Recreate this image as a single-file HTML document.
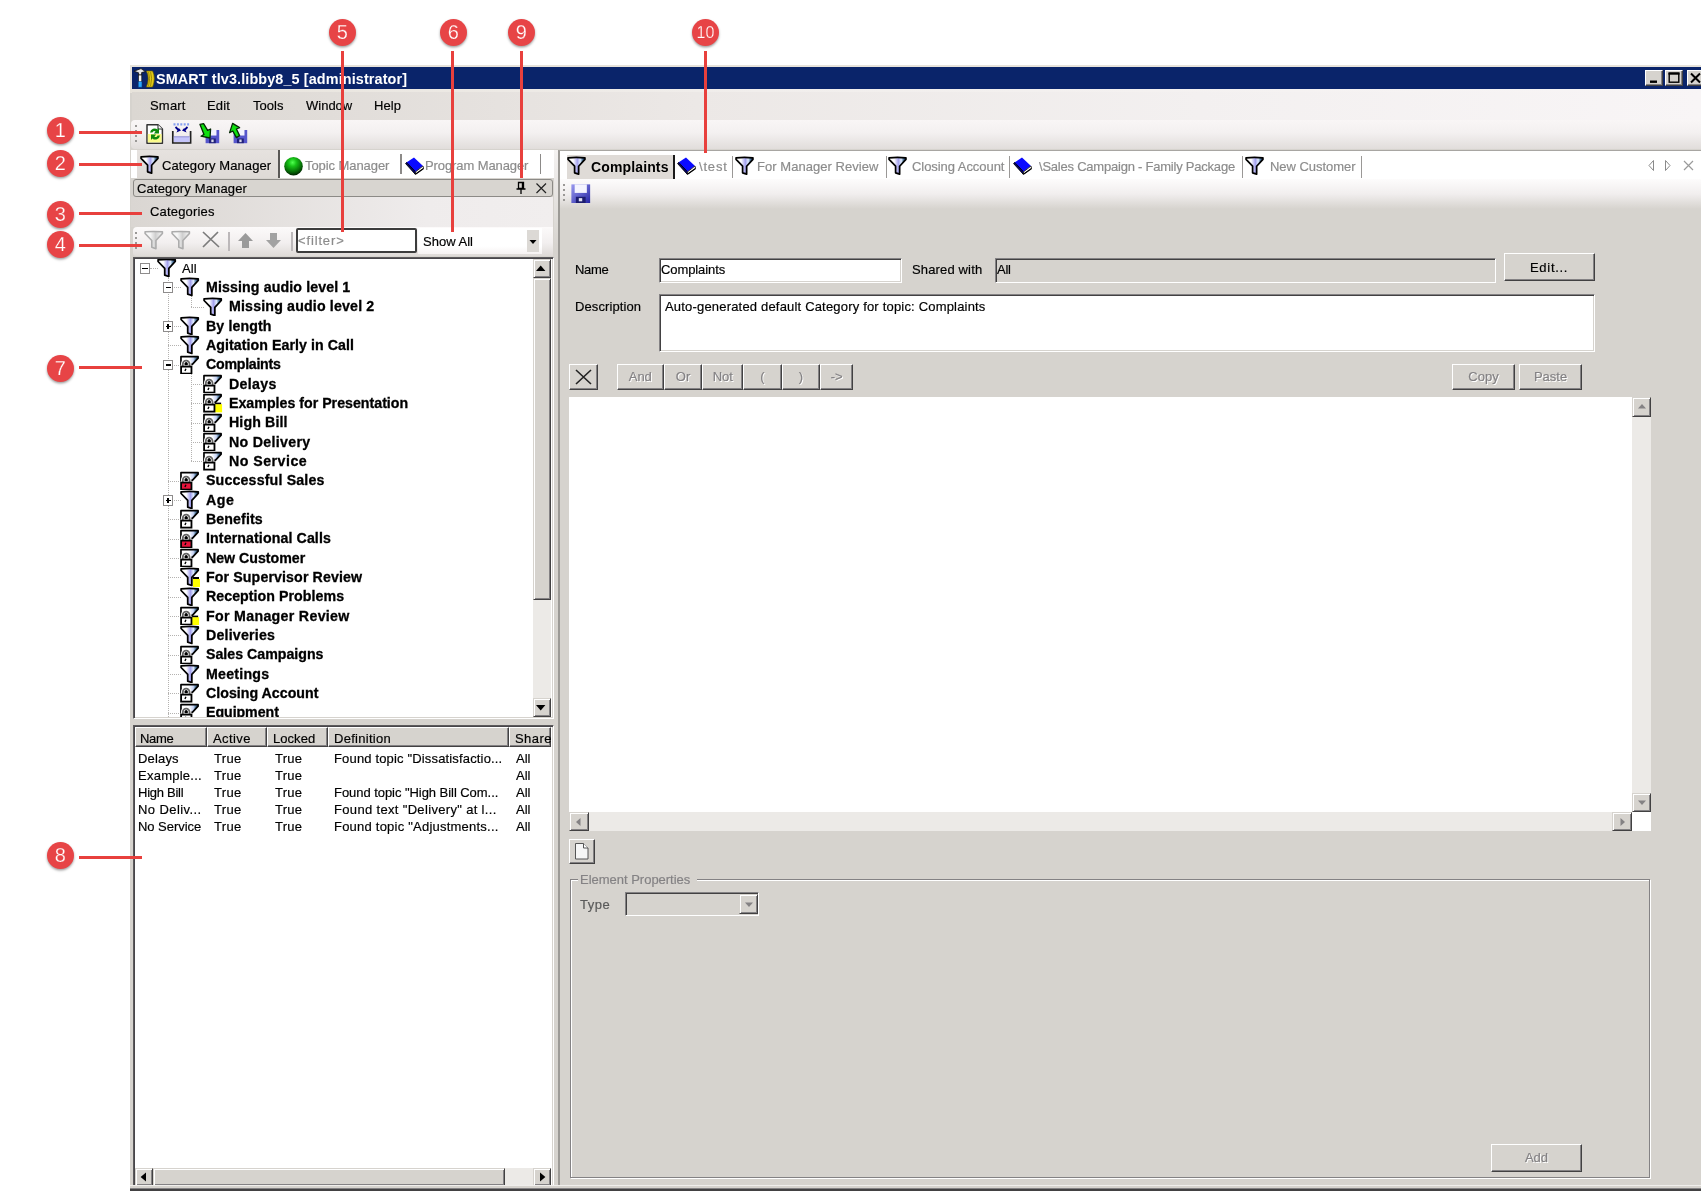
<!DOCTYPE html>
<html><head><meta charset="utf-8"><title>SMART</title>
<style>
html,body{margin:0;padding:0;background:#fff;}
body{width:1701px;height:1192px;position:relative;overflow:hidden;font-family:"Liberation Sans",sans-serif;font-size:13px;color:#000;}
div,svg{position:absolute;box-sizing:border-box;}
.t{white-space:pre;line-height:1;will-change:transform;-webkit-text-stroke:0.18px;}
.tb{white-space:pre;line-height:1;font-weight:bold;will-change:transform;}
.g{color:#8c8c8c;}
.dis{color:#848284;text-shadow:1px 1px 0 #fff;}
.sunk{border:1px solid;border-color:#848284 #fff #fff #848284;box-shadow:inset 1px 1px 0 #424142, inset -1px -1px 0 #d6d3ce;}
.btn{background:#d6d3ce;border:1px solid;border-color:#fff #424142 #424142 #fff;box-shadow:inset -1px -1px 0 #848284;}
.sb{background:#d6d3ce;border:1px solid;border-color:#d6d3ce #424142 #424142 #d6d3ce;box-shadow:inset 1px 1px 0 #fff, inset -1px -1px 0 #848284;}
.co{border-radius:50%;background:#e74446;color:#fff;text-align:center;box-shadow:0 1.5px 2.5px rgba(0,0,0,.38);will-change:transform;-webkit-text-stroke:0.25px #e74446;}
.ln{background:#e8403d;}
.hc{background:#d6d3ce;border:1px solid;border-color:#fff #424142 #424142 #fff;box-shadow:inset -1px -1px 0 #848284;}
</style></head><body>

<div style="left:130px;top:67px;width:1571px;height:1124px;background:#d6d3ce;"></div>
<div style="left:130px;top:65px;width:1571px;height:28px;background:#e7e3db;"></div>
<div style="left:130px;top:89px;width:1571px;height:4px;background:linear-gradient(90deg,#e7e3db,#f1eeec 40%,#f8f5f6);"></div>
<div style="left:132.3px;top:67.1px;width:1569px;height:22.4px;background:#0a246a;"></div>
<div class="tb" style="left:155.51px;top:71.77px;font-size:14.4px;letter-spacing:0.114px;color:#fff;">SMART tlv3.libby8_5 [administrator]</div>
<svg style="left:133px;top:68px" width="24" height="21" viewBox="0 0 24 21"><path d="M1 3.2 L8 0.6 L12.4 3.6 L8.6 4.6 L8.6 7 L5.6 7 L5.6 4.8 Z" fill="#e8e8e8" stroke="#111" stroke-width="0.8"/><rect x="5.4" y="7" width="3.4" height="7.4" fill="#f4f4f4" stroke="#111" stroke-width="0.7"/><rect x="5.2" y="13.6" width="3.8" height="5.6" fill="#28a8ff" stroke="#0a3a7a" stroke-width="0.6"/><path d="M13.4 3 Q17 10 13.4 19 L19.6 19 Q23 10 19.6 3 Z" fill="#e4cc18" stroke="#6a5c00" stroke-width="0.7"/><path d="M15.6 4 Q17.6 10 15.6 18 M17.6 4 Q19.6 10 17.6 18" stroke="#8a7800" stroke-width="0.8" fill="none"/></svg>
<div class="btn" style="left:1645px;top:70px;width:18px;height:16px;"></div>
<div class="btn" style="left:1665px;top:70px;width:18px;height:16px;"></div>
<div class="btn" style="left:1687px;top:70px;width:18px;height:16px;"></div>
<svg style="left:1645px;top:70px" width="56" height="16" viewBox="0 0 56 16"><rect x="5" y="10.5" width="7" height="2.4" fill="#000"/><rect x="24.2" y="3.2" width="9.6" height="9" fill="none" stroke="#000" stroke-width="1.4"/><rect x="23.5" y="2.5" width="11" height="2.2" fill="#000"/><path d="M46 3.5 L55 12.5 M55 3.5 L46 12.5" stroke="#000" stroke-width="2"/></svg>
<div style="left:132.3px;top:92px;width:1569px;height:28px;background:linear-gradient(90deg,#dbd7d2,#ece8e6 36%,#f3f0f0 68%,#f8f5f6);"></div>
<div style="left:131px;top:119.7px;width:1570px;height:29.3px;background:linear-gradient(#f9f6f6,#f3f0f0 45%,#e1dddb);border-radius:4px 0 0 4px;"></div>
<div class="t" style="left:150.19px;top:98.85px;font-size:13px;letter-spacing:0.190px;">Smart</div>
<div class="t" style="left:207.09px;top:98.85px;font-size:13px;letter-spacing:0.175px;">Edit</div>
<div class="t" style="left:252.78px;top:98.85px;font-size:13px;letter-spacing:0.043px;">Tools</div>
<div class="t" style="left:305.89px;top:98.85px;font-size:13px;">Window</div>
<div class="t" style="left:373.79px;top:98.85px;font-size:13px;letter-spacing:0.060px;">Help</div>
<div style="left:135px;top:125px;width:2px;height:2px;background:#9a9896;"></div>
<div style="left:135px;top:130px;width:2px;height:2px;background:#9a9896;"></div>
<div style="left:135px;top:135px;width:2px;height:2px;background:#9a9896;"></div>
<div style="left:135px;top:140px;width:2px;height:2px;background:#9a9896;"></div>
<svg style="left:145px;top:122px" width="20" height="23" viewBox="0 0 20 23"><path d="M2 2.8 H13 L17.4 7 V21.2 H2 Z" fill="#fff" stroke="#333" stroke-width="1.5" stroke-linejoin="round"/><rect x="2.8" y="12" width="13.8" height="8.4" fill="#fbfb8c"/><path d="M13 2.8 V7 H17.4" fill="#fff" stroke="#333" stroke-width="1.1"/><path d="M5 10.4 A4.6 4.6 0 0 1 12.6 7.6 L14 6 V11.4 H8.8 L10.6 9.6 A2.2 2.2 0 0 0 7.4 10.6 Z" fill="#0d8a0d"/><path d="M15 13.6 A4.6 4.6 0 0 1 7.4 16.4 L6 18 V12.6 H11.2 L9.4 14.4 A2.2 2.2 0 0 0 12.6 13.4 Z" fill="#0d8a0d"/></svg>
<svg style="left:171px;top:122px" width="22" height="23" viewBox="0 0 22 23"><path d="M1.8 9 V21 H19.6 V9" fill="none" stroke="#222" stroke-width="1.7"/><rect x="2.8" y="15" width="15.8" height="5" fill="#c4c4fa"/><path d="M2.8 14.8 H18.6" stroke="#8c8cd8" stroke-width="1"/><path d="M2.5 2.4 H19" stroke="#88a0f0" stroke-width="2.4" stroke-dasharray="2 1.4"/><path d="M4.5 5 L7.5 8 M16.5 5 L13.5 8" stroke="#00008a" stroke-width="1.8"/><path d="M5.4 10.6 L10 8.4 L7.8 6 Z M15.6 10.6 L11 8.4 L13.2 6 Z" fill="#00008a"/></svg>
<svg style="left:198px;top:122px" width="24" height="23" viewBox="0 0 24 23"><rect x="7.6" y="8" width="13.6" height="13.2" fill="#5656cc"/><rect x="10.32" y="8" width="8.16" height="5.544" fill="#f2f2ff"/><rect x="11.0" y="16.448" width="6.8" height="4.752" fill="#20207a"/><rect x="13.312" y="17.503999999999998" width="2.3120000000000003" height="2.64" fill="#d8d8e8"/><path d="M2 2.4 L5.6 1.6 L9.6 8.4 L12.6 7 L12 16 L3 14.2 L6 12.4 Z" fill="#10e010" stroke="#062a06" stroke-width="1.3" stroke-linejoin="round"/></svg>
<svg style="left:226px;top:122px" width="24" height="23" viewBox="0 0 24 23"><rect x="7.6" y="8" width="13.6" height="13.2" fill="#5656cc"/><rect x="10.32" y="8" width="8.16" height="5.544" fill="#f2f2ff"/><rect x="11.0" y="16.448" width="6.8" height="4.752" fill="#20207a"/><rect x="13.312" y="17.503999999999998" width="2.3120000000000003" height="2.64" fill="#d8d8e8"/><path d="M6.6 1.4 L13.6 5.6 L10.4 7 L13.6 13.6 L10.4 15.6 L6.8 9 L3.6 10.6 Z" fill="#10e010" stroke="#062a06" stroke-width="1.3" stroke-linejoin="round"/></svg>
<div style="left:131px;top:150px;width:425px;height:28px;background:#fff;"></div>
<div style="left:137px;top:150px;width:141px;height:28px;background:linear-gradient(#e6e2df,#dedad6);"></div>
<div style="left:278px;top:150px;width:2px;height:28px;background:#5a5856;"></div>
<svg style="left:140.00px;top:155.00px" width="19" height="19" viewBox="0 0 16 16"><defs><linearGradient id="g1" x1="0" x2="1" y1="0" y2="0"><stop offset="0.30" stop-color="#fff"/><stop offset="0.55" stop-color="#a4a2ee"/><stop offset="0.72" stop-color="#dfeaff"/><stop offset="0.86" stop-color="#4e7a9c"/><stop offset="0.97" stop-color="#10206a"/></linearGradient></defs><path d="M0.9 1.5 Q8 0.9 15.1 1.5 L15.1 2.9 L9.8 8.6 L9.8 15.3 L6.4 14.2 L6.4 8.6 L0.9 2.9 Z" fill="url(#g1)" stroke="#000" stroke-width="1.45" stroke-linejoin="round"/></svg>
<div class="t" style="left:161.59px;top:159.45px;font-size:13px;letter-spacing:0.097px;">Category Manager</div>
<svg style="left:284px;top:155.5px" width="19" height="20" viewBox="0 0 16 16.8"><defs><radialGradient id="g2" cx="0.45" cy="0.3" r="0.68"><stop offset="0" stop-color="#50ff50"/><stop offset="0.3" stop-color="#18c418"/><stop offset="0.75" stop-color="#066a06"/><stop offset="1" stop-color="#002800"/></radialGradient></defs><circle cx="8" cy="8.6" r="7.8" fill="url(#g2)"/></svg>
<div class="t g" style="left:305.29px;top:159.45px;font-size:13px;letter-spacing:-0.071px;">Topic Manager</div>
<div style="left:400px;top:153.5px;width:1.5px;height:20px;background:#8c8a88;"></div>
<svg style="left:405px;top:157px" width="19" height="18" viewBox="0 0 19 18"><path d="M1.4 5.6 L9 0.4 L18 9 L10.4 15 Z" fill="#0a0aff"/><path d="M0.6 6.6 L1.6 5.4 L10.6 14.8 L10.2 17.2 Z" fill="#00006a" stroke="#000" stroke-width="0.9" stroke-linejoin="round"/><path d="M10.6 14.8 L18 9 L18.6 11.4 L10.4 17.3 Z" fill="#fff" stroke="#222" stroke-width="0.9" stroke-linejoin="round"/><path d="M10.4 17.3 L18.6 11.6" stroke="#000" stroke-width="1.2"/></svg>
<div class="t g" style="left:424.79px;top:159.45px;font-size:13px;letter-spacing:-0.097px;">Program Manager</div>
<div style="left:539.5px;top:153.5px;width:1.5px;height:20px;background:#8c8a88;"></div>
<div style="left:132.5px;top:178.5px;width:420.5px;height:18.5px;background:#d8d5d0;border:1px solid #8c8a86;border-radius:3px;"></div>
<div class="t" style="left:136.88px;top:181.95px;font-size:13px;letter-spacing:0.144px;">Category Manager</div>
<svg style="left:514px;top:180px" width="36" height="16" viewBox="0 0 36 16"><path d="M4.5 2.5 H9.5 V8.5 H4.5 Z M2.5 9 H11.5 M7 9 V14" fill="none" stroke="#000" stroke-width="1.3"/><path d="M8.6 3 V8.5" stroke="#000" stroke-width="1.6"/><path d="M22.5 3.5 L32 13 M32 3.5 L22.5 13" stroke="#222" stroke-width="1.2"/></svg>
<div style="left:131px;top:197px;width:422px;height:30px;background:linear-gradient(90deg,#dad6d2,#efecec 70%,#f1eeee);"></div>
<div class="t" style="left:150.28px;top:205.45px;font-size:13px;letter-spacing:0.173px;">Categories</div>
<div style="left:133px;top:226.5px;width:420px;height:29.5px;background:linear-gradient(#fcfafa,#f2efef 55%,#dedad7);border-radius:4px 0 0 3px;"></div>
<div style="left:135px;top:232px;width:2px;height:2px;background:#9a9896;"></div>
<div style="left:135px;top:237px;width:2px;height:2px;background:#9a9896;"></div>
<div style="left:135px;top:242px;width:2px;height:2px;background:#9a9896;"></div>
<div style="left:135px;top:247px;width:2px;height:2px;background:#9a9896;"></div>
<svg style="left:144.00px;top:230.00px" width="19.5" height="19.5" viewBox="0 0 16 16"><defs><linearGradient id="g3" x1="0" x2="1" y1="0" y2="0"><stop offset="0.3" stop-color="#f6f6f6"/><stop offset="0.6" stop-color="#cfcfcf"/><stop offset="0.85" stop-color="#e8e8e8"/></linearGradient></defs><path d="M0.9 1.5 Q8 0.9 15.1 1.5 L15.1 2.9 L9.8 8.6 L9.8 15.3 L6.4 14.2 L6.4 8.6 L0.9 2.9 Z" fill="url(#g3)" stroke="#acacac" stroke-width="1.3" stroke-linejoin="round"/></svg>
<svg style="left:171.00px;top:230.00px" width="19.5" height="19.5" viewBox="0 0 16 16"><defs><linearGradient id="g4" x1="0" x2="1" y1="0" y2="0"><stop offset="0.3" stop-color="#f6f6f6"/><stop offset="0.6" stop-color="#cfcfcf"/><stop offset="0.85" stop-color="#e8e8e8"/></linearGradient></defs><path d="M0.9 1.5 Q8 0.9 15.1 1.5 L15.1 2.9 L9.8 8.6 L9.8 15.3 L6.4 14.2 L6.4 8.6 L0.9 2.9 Z" fill="url(#g4)" stroke="#acacac" stroke-width="1.3" stroke-linejoin="round"/></svg>
<svg style="left:200px;top:229px" width="22" height="21" viewBox="0 0 22 21"><path d="M3 3 L19 18 M18 3 L3 18" stroke="#7c7c7c" stroke-width="1.7"/></svg>
<div style="left:228px;top:232px;width:1.5px;height:18.5px;background:#bcb8ba;"></div>
<svg style="left:235.5px;top:230.5px" width="48" height="20" viewBox="0 0 48 20"><path d="M9.5 2 L17 10 H13 V17 H6 V10 H2 Z" fill="#9a9a9a"/><path d="M37.5 17 L45 9 H41 V2 H34 V9 H30 Z" fill="#a2a2a2"/></svg>
<div style="left:291px;top:232px;width:1.5px;height:18.5px;background:#bcb8ba;"></div>
<div style="left:295.7px;top:227.6px;width:121.5px;height:25.6px;background:#fff;border:2px solid #3c3c3c;border-radius:2px;"></div>
<div class="t g" style="left:298.29px;top:233.65px;font-size:13px;letter-spacing:0.854px;">&lt;filter&gt;</div>
<div style="left:418px;top:228px;width:124px;height:26px;background:linear-gradient(#fff 70%,#f6f2f2);"></div>
<div class="t" style="left:422.59px;top:235.45px;font-size:13px;letter-spacing:0.008px;">Show All</div>
<div style="left:527.4px;top:230px;width:11.4px;height:21.6px;background:#dcd9d5;"></div>
<svg style="left:527px;top:237.5px" width="12" height="8" viewBox="0 0 12 8"><path d="M2.5 2 H9.5 L6 6 Z" fill="#000"/></svg>
<div style="left:133px;top:256.7px;width:420.5px;height:462px;background:#fff;border:1px solid;border-color:#5c5a5c #fff #fff #5c5a5c;box-shadow:inset 1px 1px 0 #48464a, inset -1px -1px 0 #d6d3ce;"></div>
<div style="left:135px;top:258.7px;width:416.5px;height:458px;overflow:hidden;">
<div style="left:32.7px;top:18.3px;width:0;height:445.6px;border-left:1px dotted #b4b2b0;"></div>
<div style="left:55.8px;top:37.6px;width:0;height:10.3px;border-left:1px dotted #b4b2b0;"></div>
<div style="left:55.8px;top:114.9px;width:0;height:87.6px;border-left:1px dotted #b4b2b0;"></div>
<div style="left:15.0px;top:9.3px;width:8.0px;height:0;border-top:1px dotted #b4b2b0;"></div>
<div style="left:4.7px;top:4.5px;width:10.6px;height:10.6px;border:1.2px solid #8e8c8c;background:#fff;"></div>
<div style="left:7.4px;top:9.1px;width:5.2px;height:1.4px;background:#000;"></div>
<svg style="left:22.30px;top:-0.60px" width="19.33" height="19.33" viewBox="0 0 16 16"><defs><linearGradient id="g5" x1="0" x2="1" y1="0" y2="0"><stop offset="0.30" stop-color="#fff"/><stop offset="0.55" stop-color="#a4a2ee"/><stop offset="0.72" stop-color="#dfeaff"/><stop offset="0.86" stop-color="#4e7a9c"/><stop offset="0.97" stop-color="#10206a"/></linearGradient></defs><path d="M0.9 1.5 Q8 0.9 15.1 1.5 L15.1 2.9 L9.8 8.6 L9.8 15.3 L6.4 14.2 L6.4 8.6 L0.9 2.9 Z" fill="url(#g5)" stroke="#000" stroke-width="1.45" stroke-linejoin="round"/></svg>
<div class="t" style="left:47.28px;top:3.25px;font-size:13px;letter-spacing:0.088px;">All</div>
<div style="left:33.0px;top:28.6px;width:13.0px;height:0;border-top:1px dotted #b4b2b0;"></div>
<div style="left:27.8px;top:23.8px;width:10.6px;height:10.6px;border:1.2px solid #8e8c8c;background:#fff;"></div>
<div style="left:30.5px;top:28.4px;width:5.2px;height:1.4px;background:#000;"></div>
<svg style="left:45.40px;top:18.73px" width="19.33" height="19.33" viewBox="0 0 16 16"><defs><linearGradient id="g6" x1="0" x2="1" y1="0" y2="0"><stop offset="0.30" stop-color="#fff"/><stop offset="0.55" stop-color="#a4a2ee"/><stop offset="0.72" stop-color="#dfeaff"/><stop offset="0.86" stop-color="#4e7a9c"/><stop offset="0.97" stop-color="#10206a"/></linearGradient></defs><path d="M0.9 1.5 Q8 0.9 15.1 1.5 L15.1 2.9 L9.8 8.6 L9.8 15.3 L6.4 14.2 L6.4 8.6 L0.9 2.9 Z" fill="url(#g6)" stroke="#000" stroke-width="1.45" stroke-linejoin="round"/></svg>
<div class="tb" style="left:70.92px;top:21.39px;font-size:14.2px;letter-spacing:0.117px;-webkit-text-stroke:0.3px #000;">Missing audio level 1</div>
<div style="left:56.0px;top:48.0px;width:13.0px;height:0;border-top:1px dotted #b4b2b0;"></div>
<svg style="left:68.40px;top:38.06px" width="19.33" height="19.33" viewBox="0 0 16 16"><defs><linearGradient id="g7" x1="0" x2="1" y1="0" y2="0"><stop offset="0.30" stop-color="#fff"/><stop offset="0.55" stop-color="#a4a2ee"/><stop offset="0.72" stop-color="#dfeaff"/><stop offset="0.86" stop-color="#4e7a9c"/><stop offset="0.97" stop-color="#10206a"/></linearGradient></defs><path d="M0.9 1.5 Q8 0.9 15.1 1.5 L15.1 2.9 L9.8 8.6 L9.8 15.3 L6.4 14.2 L6.4 8.6 L0.9 2.9 Z" fill="url(#g7)" stroke="#000" stroke-width="1.45" stroke-linejoin="round"/></svg>
<div class="tb" style="left:94.02px;top:40.72px;font-size:14.2px;letter-spacing:0.167px;-webkit-text-stroke:0.3px #000;">Missing audio level 2</div>
<div style="left:33.0px;top:67.3px;width:13.0px;height:0;border-top:1px dotted #b4b2b0;"></div>
<div style="left:27.8px;top:62.5px;width:10.6px;height:10.6px;border:1.2px solid #8e8c8c;background:#fff;"></div>
<div style="left:30.5px;top:67.1px;width:5.2px;height:1.4px;background:#000;"></div>
<div style="left:32.4px;top:65.2px;width:1.4px;height:5.2px;background:#000;"></div>
<svg style="left:45.40px;top:57.39px" width="19.33" height="19.33" viewBox="0 0 16 16"><defs><linearGradient id="g8" x1="0" x2="1" y1="0" y2="0"><stop offset="0.30" stop-color="#fff"/><stop offset="0.55" stop-color="#a4a2ee"/><stop offset="0.72" stop-color="#dfeaff"/><stop offset="0.86" stop-color="#4e7a9c"/><stop offset="0.97" stop-color="#10206a"/></linearGradient></defs><path d="M0.9 1.5 Q8 0.9 15.1 1.5 L15.1 2.9 L9.8 8.6 L9.8 15.3 L6.4 14.2 L6.4 8.6 L0.9 2.9 Z" fill="url(#g8)" stroke="#000" stroke-width="1.45" stroke-linejoin="round"/></svg>
<div class="tb" style="left:70.92px;top:60.05px;font-size:14.2px;letter-spacing:0.103px;-webkit-text-stroke:0.3px #000;">By length</div>
<div style="left:33.0px;top:86.6px;width:13.0px;height:0;border-top:1px dotted #b4b2b0;"></div>
<svg style="left:45.40px;top:76.72px" width="19.33" height="19.33" viewBox="0 0 16 16"><defs><linearGradient id="g9" x1="0" x2="1" y1="0" y2="0"><stop offset="0.30" stop-color="#fff"/><stop offset="0.55" stop-color="#a4a2ee"/><stop offset="0.72" stop-color="#dfeaff"/><stop offset="0.86" stop-color="#4e7a9c"/><stop offset="0.97" stop-color="#10206a"/></linearGradient></defs><path d="M0.9 1.5 Q8 0.9 15.1 1.5 L15.1 2.9 L9.8 8.6 L9.8 15.3 L6.4 14.2 L6.4 8.6 L0.9 2.9 Z" fill="url(#g9)" stroke="#000" stroke-width="1.45" stroke-linejoin="round"/></svg>
<div class="tb" style="left:70.92px;top:79.38px;font-size:14.2px;letter-spacing:0.056px;-webkit-text-stroke:0.3px #000;">Agitation Early in Call</div>
<div style="left:33.0px;top:105.9px;width:13.0px;height:0;border-top:1px dotted #b4b2b0;"></div>
<div style="left:27.8px;top:101.1px;width:10.6px;height:10.6px;border:1.2px solid #8e8c8c;background:#fff;"></div>
<div style="left:30.5px;top:105.7px;width:5.2px;height:1.4px;background:#000;"></div>
<svg style="left:45.40px;top:96.05px" width="19.33" height="19.33" viewBox="0 0 16 16"><defs><linearGradient id="g10" x1="0" x2="1" y1="0" y2="0"><stop offset="0.45" stop-color="#fff"/><stop offset="0.72" stop-color="#c8d4f4"/><stop offset="0.86" stop-color="#4e7a9c"/><stop offset="1" stop-color="#10206a"/></linearGradient></defs><path d="M0.8 1.4 H15 L15 2.6 L10.2 7.8 L0.8 7.8 Z" fill="url(#g10)" stroke="#000" stroke-width="1.4" stroke-linejoin="round"/><path d="M2.3 9.6 V7.4 A2.8 2.8 0 0 1 7.9 7.4 V9.6" fill="none" stroke="#fff" stroke-width="3"/><path d="M2.3 9.6 V7.4 A2.8 2.8 0 0 1 7.9 7.4 V9.6" fill="none" stroke="#666" stroke-width="1.5"/><circle cx="5.1" cy="7.1" r="1.25" fill="#000"/><rect x="0.9" y="9.6" width="8.6" height="5.8" fill="#fff" stroke="#000" stroke-width="1.5"/><path d="M4.9 11.3 L4.1 13.3" stroke="#000" stroke-width="1.1"/></svg>
<div class="tb" style="left:70.92px;top:98.71px;font-size:14.2px;letter-spacing:-0.265px;-webkit-text-stroke:0.3px #000;">Complaints</div>
<div style="left:56.0px;top:125.3px;width:13.0px;height:0;border-top:1px dotted #b4b2b0;"></div>
<svg style="left:68.40px;top:115.38px" width="19.33" height="19.33" viewBox="0 0 16 16"><defs><linearGradient id="g11" x1="0" x2="1" y1="0" y2="0"><stop offset="0.45" stop-color="#fff"/><stop offset="0.72" stop-color="#c8d4f4"/><stop offset="0.86" stop-color="#4e7a9c"/><stop offset="1" stop-color="#10206a"/></linearGradient></defs><path d="M0.8 1.4 H15 L15 2.6 L10.2 7.8 L0.8 7.8 Z" fill="url(#g11)" stroke="#000" stroke-width="1.4" stroke-linejoin="round"/><path d="M2.3 9.6 V7.4 A2.8 2.8 0 0 1 7.9 7.4 V9.6" fill="none" stroke="#fff" stroke-width="3"/><path d="M2.3 9.6 V7.4 A2.8 2.8 0 0 1 7.9 7.4 V9.6" fill="none" stroke="#666" stroke-width="1.5"/><circle cx="5.1" cy="7.1" r="1.25" fill="#000"/><rect x="0.9" y="9.6" width="8.6" height="5.8" fill="#fff" stroke="#000" stroke-width="1.5"/><path d="M4.9 11.3 L4.1 13.3" stroke="#000" stroke-width="1.1"/></svg>
<div class="tb" style="left:94.02px;top:118.04px;font-size:14.2px;letter-spacing:0.322px;-webkit-text-stroke:0.3px #000;">Delays</div>
<div style="left:56.0px;top:144.6px;width:13.0px;height:0;border-top:1px dotted #b4b2b0;"></div>
<svg style="left:68.40px;top:134.71px" width="19.33" height="19.33" viewBox="0 0 16 16"><defs><linearGradient id="g12" x1="0" x2="1" y1="0" y2="0"><stop offset="0.45" stop-color="#fff"/><stop offset="0.72" stop-color="#c8d4f4"/><stop offset="0.86" stop-color="#4e7a9c"/><stop offset="1" stop-color="#10206a"/></linearGradient></defs><path d="M0.8 1.4 H15 L15 2.6 L10.2 7.8 L0.8 7.8 Z" fill="url(#g12)" stroke="#000" stroke-width="1.4" stroke-linejoin="round"/><rect x="10" y="9.2" width="5.8" height="6.8" fill="#ffff00"/><path d="M10 8.6 H15" stroke="#000" stroke-width="1.3"/><path d="M2.3 9.6 V7.4 A2.8 2.8 0 0 1 7.9 7.4 V9.6" fill="none" stroke="#fff" stroke-width="3"/><path d="M2.3 9.6 V7.4 A2.8 2.8 0 0 1 7.9 7.4 V9.6" fill="none" stroke="#666" stroke-width="1.5"/><circle cx="5.1" cy="7.1" r="1.25" fill="#000"/><rect x="0.9" y="9.6" width="8.6" height="5.8" fill="#fff" stroke="#000" stroke-width="1.5"/><path d="M4.9 11.3 L4.1 13.3" stroke="#000" stroke-width="1.1"/></svg>
<div class="tb" style="left:94.02px;top:137.37px;font-size:14.2px;letter-spacing:0.007px;-webkit-text-stroke:0.3px #000;">Examples for Presentation</div>
<div style="left:56.0px;top:163.9px;width:13.0px;height:0;border-top:1px dotted #b4b2b0;"></div>
<svg style="left:68.40px;top:154.04px" width="19.33" height="19.33" viewBox="0 0 16 16"><defs><linearGradient id="g13" x1="0" x2="1" y1="0" y2="0"><stop offset="0.45" stop-color="#fff"/><stop offset="0.72" stop-color="#c8d4f4"/><stop offset="0.86" stop-color="#4e7a9c"/><stop offset="1" stop-color="#10206a"/></linearGradient></defs><path d="M0.8 1.4 H15 L15 2.6 L10.2 7.8 L0.8 7.8 Z" fill="url(#g13)" stroke="#000" stroke-width="1.4" stroke-linejoin="round"/><path d="M2.3 9.6 V7.4 A2.8 2.8 0 0 1 7.9 7.4 V9.6" fill="none" stroke="#fff" stroke-width="3"/><path d="M2.3 9.6 V7.4 A2.8 2.8 0 0 1 7.9 7.4 V9.6" fill="none" stroke="#666" stroke-width="1.5"/><circle cx="5.1" cy="7.1" r="1.25" fill="#000"/><rect x="0.9" y="9.6" width="8.6" height="5.8" fill="#fff" stroke="#000" stroke-width="1.5"/><path d="M4.9 11.3 L4.1 13.3" stroke="#000" stroke-width="1.1"/></svg>
<div class="tb" style="left:94.02px;top:156.70px;font-size:14.2px;letter-spacing:0.127px;-webkit-text-stroke:0.3px #000;">High Bill</div>
<div style="left:56.0px;top:183.3px;width:13.0px;height:0;border-top:1px dotted #b4b2b0;"></div>
<svg style="left:68.40px;top:173.37px" width="19.33" height="19.33" viewBox="0 0 16 16"><defs><linearGradient id="g14" x1="0" x2="1" y1="0" y2="0"><stop offset="0.45" stop-color="#fff"/><stop offset="0.72" stop-color="#c8d4f4"/><stop offset="0.86" stop-color="#4e7a9c"/><stop offset="1" stop-color="#10206a"/></linearGradient></defs><path d="M0.8 1.4 H15 L15 2.6 L10.2 7.8 L0.8 7.8 Z" fill="url(#g14)" stroke="#000" stroke-width="1.4" stroke-linejoin="round"/><path d="M2.3 9.6 V7.4 A2.8 2.8 0 0 1 7.9 7.4 V9.6" fill="none" stroke="#fff" stroke-width="3"/><path d="M2.3 9.6 V7.4 A2.8 2.8 0 0 1 7.9 7.4 V9.6" fill="none" stroke="#666" stroke-width="1.5"/><circle cx="5.1" cy="7.1" r="1.25" fill="#000"/><rect x="0.9" y="9.6" width="8.6" height="5.8" fill="#fff" stroke="#000" stroke-width="1.5"/><path d="M4.9 11.3 L4.1 13.3" stroke="#000" stroke-width="1.1"/></svg>
<div class="tb" style="left:94.02px;top:176.03px;font-size:14.2px;letter-spacing:0.308px;-webkit-text-stroke:0.3px #000;">No Delivery</div>
<div style="left:56.0px;top:202.6px;width:13.0px;height:0;border-top:1px dotted #b4b2b0;"></div>
<svg style="left:68.40px;top:192.70px" width="19.33" height="19.33" viewBox="0 0 16 16"><defs><linearGradient id="g15" x1="0" x2="1" y1="0" y2="0"><stop offset="0.45" stop-color="#fff"/><stop offset="0.72" stop-color="#c8d4f4"/><stop offset="0.86" stop-color="#4e7a9c"/><stop offset="1" stop-color="#10206a"/></linearGradient></defs><path d="M0.8 1.4 H15 L15 2.6 L10.2 7.8 L0.8 7.8 Z" fill="url(#g15)" stroke="#000" stroke-width="1.4" stroke-linejoin="round"/><path d="M2.3 9.6 V7.4 A2.8 2.8 0 0 1 7.9 7.4 V9.6" fill="none" stroke="#fff" stroke-width="3"/><path d="M2.3 9.6 V7.4 A2.8 2.8 0 0 1 7.9 7.4 V9.6" fill="none" stroke="#666" stroke-width="1.5"/><circle cx="5.1" cy="7.1" r="1.25" fill="#000"/><rect x="0.9" y="9.6" width="8.6" height="5.8" fill="#fff" stroke="#000" stroke-width="1.5"/><path d="M4.9 11.3 L4.1 13.3" stroke="#000" stroke-width="1.1"/></svg>
<div class="tb" style="left:94.02px;top:195.36px;font-size:14.2px;letter-spacing:0.480px;-webkit-text-stroke:0.3px #000;">No Service</div>
<div style="left:33.0px;top:221.9px;width:13.0px;height:0;border-top:1px dotted #b4b2b0;"></div>
<svg style="left:45.40px;top:212.03px" width="19.33" height="19.33" viewBox="0 0 16 16"><defs><linearGradient id="g16" x1="0" x2="1" y1="0" y2="0"><stop offset="0.45" stop-color="#fff"/><stop offset="0.72" stop-color="#c8d4f4"/><stop offset="0.86" stop-color="#4e7a9c"/><stop offset="1" stop-color="#10206a"/></linearGradient></defs><path d="M0.8 1.4 H15 L15 2.6 L10.2 7.8 L0.8 7.8 Z" fill="url(#g16)" stroke="#000" stroke-width="1.4" stroke-linejoin="round"/><path d="M2.3 9.6 V7.4 A2.8 2.8 0 0 1 7.9 7.4 V9.6" fill="none" stroke="#fff" stroke-width="3"/><path d="M2.3 9.6 V7.4 A2.8 2.8 0 0 1 7.9 7.4 V9.6" fill="none" stroke="#666" stroke-width="1.5"/><circle cx="5.1" cy="7.1" r="1.25" fill="#000"/><rect x="0.9" y="9.6" width="8.6" height="5.8" fill="#e8143c" stroke="#000" stroke-width="1.5"/><path d="M4.9 11.3 L4.1 13.3" stroke="#000" stroke-width="1.1"/></svg>
<div class="tb" style="left:70.92px;top:214.69px;font-size:14.2px;letter-spacing:0.162px;-webkit-text-stroke:0.3px #000;">Successful Sales</div>
<div style="left:33.0px;top:241.3px;width:13.0px;height:0;border-top:1px dotted #b4b2b0;"></div>
<div style="left:27.8px;top:236.5px;width:10.6px;height:10.6px;border:1.2px solid #8e8c8c;background:#fff;"></div>
<div style="left:30.5px;top:241.1px;width:5.2px;height:1.4px;background:#000;"></div>
<div style="left:32.4px;top:239.2px;width:1.4px;height:5.2px;background:#000;"></div>
<svg style="left:45.40px;top:231.36px" width="19.33" height="19.33" viewBox="0 0 16 16"><defs><linearGradient id="g17" x1="0" x2="1" y1="0" y2="0"><stop offset="0.30" stop-color="#fff"/><stop offset="0.55" stop-color="#a4a2ee"/><stop offset="0.72" stop-color="#dfeaff"/><stop offset="0.86" stop-color="#4e7a9c"/><stop offset="0.97" stop-color="#10206a"/></linearGradient></defs><path d="M0.9 1.5 Q8 0.9 15.1 1.5 L15.1 2.9 L9.8 8.6 L9.8 15.3 L6.4 14.2 L6.4 8.6 L0.9 2.9 Z" fill="url(#g17)" stroke="#000" stroke-width="1.45" stroke-linejoin="round"/></svg>
<div class="tb" style="left:70.92px;top:234.02px;font-size:14.2px;letter-spacing:0.525px;-webkit-text-stroke:0.3px #000;">Age</div>
<div style="left:33.0px;top:260.6px;width:13.0px;height:0;border-top:1px dotted #b4b2b0;"></div>
<svg style="left:45.40px;top:250.69px" width="19.33" height="19.33" viewBox="0 0 16 16"><defs><linearGradient id="g18" x1="0" x2="1" y1="0" y2="0"><stop offset="0.45" stop-color="#fff"/><stop offset="0.72" stop-color="#c8d4f4"/><stop offset="0.86" stop-color="#4e7a9c"/><stop offset="1" stop-color="#10206a"/></linearGradient></defs><path d="M0.8 1.4 H15 L15 2.6 L10.2 7.8 L0.8 7.8 Z" fill="url(#g18)" stroke="#000" stroke-width="1.4" stroke-linejoin="round"/><path d="M2.3 9.6 V7.4 A2.8 2.8 0 0 1 7.9 7.4 V9.6" fill="none" stroke="#fff" stroke-width="3"/><path d="M2.3 9.6 V7.4 A2.8 2.8 0 0 1 7.9 7.4 V9.6" fill="none" stroke="#666" stroke-width="1.5"/><circle cx="5.1" cy="7.1" r="1.25" fill="#000"/><rect x="0.9" y="9.6" width="8.6" height="5.8" fill="#fff" stroke="#000" stroke-width="1.5"/><path d="M4.9 11.3 L4.1 13.3" stroke="#000" stroke-width="1.1"/></svg>
<div class="tb" style="left:70.92px;top:253.35px;font-size:14.2px;letter-spacing:0.097px;-webkit-text-stroke:0.3px #000;">Benefits</div>
<div style="left:33.0px;top:279.9px;width:13.0px;height:0;border-top:1px dotted #b4b2b0;"></div>
<svg style="left:45.40px;top:270.02px" width="19.33" height="19.33" viewBox="0 0 16 16"><defs><linearGradient id="g19" x1="0" x2="1" y1="0" y2="0"><stop offset="0.45" stop-color="#fff"/><stop offset="0.72" stop-color="#c8d4f4"/><stop offset="0.86" stop-color="#4e7a9c"/><stop offset="1" stop-color="#10206a"/></linearGradient></defs><path d="M0.8 1.4 H15 L15 2.6 L10.2 7.8 L0.8 7.8 Z" fill="url(#g19)" stroke="#000" stroke-width="1.4" stroke-linejoin="round"/><path d="M2.3 9.6 V7.4 A2.8 2.8 0 0 1 7.9 7.4 V9.6" fill="none" stroke="#fff" stroke-width="3"/><path d="M2.3 9.6 V7.4 A2.8 2.8 0 0 1 7.9 7.4 V9.6" fill="none" stroke="#666" stroke-width="1.5"/><circle cx="5.1" cy="7.1" r="1.25" fill="#000"/><rect x="0.9" y="9.6" width="8.6" height="5.8" fill="#e8143c" stroke="#000" stroke-width="1.5"/><path d="M4.9 11.3 L4.1 13.3" stroke="#000" stroke-width="1.1"/></svg>
<div class="tb" style="left:70.92px;top:272.68px;font-size:14.2px;letter-spacing:0.104px;-webkit-text-stroke:0.3px #000;">International Calls</div>
<div style="left:33.0px;top:299.3px;width:13.0px;height:0;border-top:1px dotted #b4b2b0;"></div>
<svg style="left:45.40px;top:289.35px" width="19.33" height="19.33" viewBox="0 0 16 16"><defs><linearGradient id="g20" x1="0" x2="1" y1="0" y2="0"><stop offset="0.45" stop-color="#fff"/><stop offset="0.72" stop-color="#c8d4f4"/><stop offset="0.86" stop-color="#4e7a9c"/><stop offset="1" stop-color="#10206a"/></linearGradient></defs><path d="M0.8 1.4 H15 L15 2.6 L10.2 7.8 L0.8 7.8 Z" fill="url(#g20)" stroke="#000" stroke-width="1.4" stroke-linejoin="round"/><path d="M2.3 9.6 V7.4 A2.8 2.8 0 0 1 7.9 7.4 V9.6" fill="none" stroke="#fff" stroke-width="3"/><path d="M2.3 9.6 V7.4 A2.8 2.8 0 0 1 7.9 7.4 V9.6" fill="none" stroke="#666" stroke-width="1.5"/><circle cx="5.1" cy="7.1" r="1.25" fill="#000"/><rect x="0.9" y="9.6" width="8.6" height="5.8" fill="#fff" stroke="#000" stroke-width="1.5"/><path d="M4.9 11.3 L4.1 13.3" stroke="#000" stroke-width="1.1"/></svg>
<div class="tb" style="left:70.92px;top:292.01px;font-size:14.2px;letter-spacing:-0.007px;-webkit-text-stroke:0.3px #000;">New Customer</div>
<div style="left:33.0px;top:318.6px;width:13.0px;height:0;border-top:1px dotted #b4b2b0;"></div>
<svg style="left:45.40px;top:308.68px" width="19.33" height="19.33" viewBox="0 0 16 16"><defs><linearGradient id="g21" x1="0" x2="1" y1="0" y2="0"><stop offset="0.30" stop-color="#fff"/><stop offset="0.55" stop-color="#a4a2ee"/><stop offset="0.72" stop-color="#dfeaff"/><stop offset="0.86" stop-color="#4e7a9c"/><stop offset="0.97" stop-color="#10206a"/></linearGradient></defs><path d="M0.9 1.5 Q8 0.9 15.1 1.5 L15.1 2.9 L9.8 8.6 L9.8 15.3 L6.4 14.2 L6.4 8.6 L0.9 2.9 Z" fill="url(#g21)" stroke="#000" stroke-width="1.45" stroke-linejoin="round"/></svg>
<div style="left:57.8px;top:319.9px;width:7px;height:8.2px;background:#ffff00;"></div>
<div style="left:57.8px;top:318.5px;width:6px;height:1.6px;background:#000;"></div>
<div class="tb" style="left:70.92px;top:311.34px;font-size:14.2px;letter-spacing:0.116px;-webkit-text-stroke:0.3px #000;">For Supervisor Review</div>
<div style="left:33.0px;top:337.9px;width:13.0px;height:0;border-top:1px dotted #b4b2b0;"></div>
<svg style="left:45.40px;top:328.01px" width="19.33" height="19.33" viewBox="0 0 16 16"><defs><linearGradient id="g22" x1="0" x2="1" y1="0" y2="0"><stop offset="0.30" stop-color="#fff"/><stop offset="0.55" stop-color="#a4a2ee"/><stop offset="0.72" stop-color="#dfeaff"/><stop offset="0.86" stop-color="#4e7a9c"/><stop offset="0.97" stop-color="#10206a"/></linearGradient></defs><path d="M0.9 1.5 Q8 0.9 15.1 1.5 L15.1 2.9 L9.8 8.6 L9.8 15.3 L6.4 14.2 L6.4 8.6 L0.9 2.9 Z" fill="url(#g22)" stroke="#000" stroke-width="1.45" stroke-linejoin="round"/></svg>
<div class="tb" style="left:70.92px;top:330.67px;font-size:14.2px;letter-spacing:0.051px;-webkit-text-stroke:0.3px #000;">Reception Problems</div>
<div style="left:33.0px;top:357.2px;width:13.0px;height:0;border-top:1px dotted #b4b2b0;"></div>
<svg style="left:45.40px;top:347.34px" width="19.33" height="19.33" viewBox="0 0 16 16"><defs><linearGradient id="g23" x1="0" x2="1" y1="0" y2="0"><stop offset="0.45" stop-color="#fff"/><stop offset="0.72" stop-color="#c8d4f4"/><stop offset="0.86" stop-color="#4e7a9c"/><stop offset="1" stop-color="#10206a"/></linearGradient></defs><path d="M0.8 1.4 H15 L15 2.6 L10.2 7.8 L0.8 7.8 Z" fill="url(#g23)" stroke="#000" stroke-width="1.4" stroke-linejoin="round"/><rect x="10" y="9.2" width="5.8" height="6.8" fill="#ffff00"/><path d="M10 8.6 H15" stroke="#000" stroke-width="1.3"/><path d="M2.3 9.6 V7.4 A2.8 2.8 0 0 1 7.9 7.4 V9.6" fill="none" stroke="#fff" stroke-width="3"/><path d="M2.3 9.6 V7.4 A2.8 2.8 0 0 1 7.9 7.4 V9.6" fill="none" stroke="#666" stroke-width="1.5"/><circle cx="5.1" cy="7.1" r="1.25" fill="#000"/><rect x="0.9" y="9.6" width="8.6" height="5.8" fill="#fff" stroke="#000" stroke-width="1.5"/><path d="M4.9 11.3 L4.1 13.3" stroke="#000" stroke-width="1.1"/></svg>
<div class="tb" style="left:70.92px;top:350.00px;font-size:14.2px;letter-spacing:0.316px;-webkit-text-stroke:0.3px #000;">For Manager Review</div>
<div style="left:33.0px;top:376.6px;width:13.0px;height:0;border-top:1px dotted #b4b2b0;"></div>
<svg style="left:45.40px;top:366.67px" width="19.33" height="19.33" viewBox="0 0 16 16"><defs><linearGradient id="g24" x1="0" x2="1" y1="0" y2="0"><stop offset="0.30" stop-color="#fff"/><stop offset="0.55" stop-color="#a4a2ee"/><stop offset="0.72" stop-color="#dfeaff"/><stop offset="0.86" stop-color="#4e7a9c"/><stop offset="0.97" stop-color="#10206a"/></linearGradient></defs><path d="M0.9 1.5 Q8 0.9 15.1 1.5 L15.1 2.9 L9.8 8.6 L9.8 15.3 L6.4 14.2 L6.4 8.6 L0.9 2.9 Z" fill="url(#g24)" stroke="#000" stroke-width="1.45" stroke-linejoin="round"/></svg>
<div class="tb" style="left:70.92px;top:369.33px;font-size:14.2px;letter-spacing:0.202px;-webkit-text-stroke:0.3px #000;">Deliveries</div>
<div style="left:33.0px;top:395.9px;width:13.0px;height:0;border-top:1px dotted #b4b2b0;"></div>
<svg style="left:45.40px;top:386.00px" width="19.33" height="19.33" viewBox="0 0 16 16"><defs><linearGradient id="g25" x1="0" x2="1" y1="0" y2="0"><stop offset="0.45" stop-color="#fff"/><stop offset="0.72" stop-color="#c8d4f4"/><stop offset="0.86" stop-color="#4e7a9c"/><stop offset="1" stop-color="#10206a"/></linearGradient></defs><path d="M0.8 1.4 H15 L15 2.6 L10.2 7.8 L0.8 7.8 Z" fill="url(#g25)" stroke="#000" stroke-width="1.4" stroke-linejoin="round"/><path d="M2.3 9.6 V7.4 A2.8 2.8 0 0 1 7.9 7.4 V9.6" fill="none" stroke="#fff" stroke-width="3"/><path d="M2.3 9.6 V7.4 A2.8 2.8 0 0 1 7.9 7.4 V9.6" fill="none" stroke="#666" stroke-width="1.5"/><circle cx="5.1" cy="7.1" r="1.25" fill="#000"/><rect x="0.9" y="9.6" width="8.6" height="5.8" fill="#fff" stroke="#000" stroke-width="1.5"/><path d="M4.9 11.3 L4.1 13.3" stroke="#000" stroke-width="1.1"/></svg>
<div class="tb" style="left:70.92px;top:388.66px;font-size:14.2px;-webkit-text-stroke:0.3px #000;">Sales Campaigns</div>
<div style="left:33.0px;top:415.2px;width:13.0px;height:0;border-top:1px dotted #b4b2b0;"></div>
<svg style="left:45.40px;top:405.33px" width="19.33" height="19.33" viewBox="0 0 16 16"><defs><linearGradient id="g26" x1="0" x2="1" y1="0" y2="0"><stop offset="0.30" stop-color="#fff"/><stop offset="0.55" stop-color="#a4a2ee"/><stop offset="0.72" stop-color="#dfeaff"/><stop offset="0.86" stop-color="#4e7a9c"/><stop offset="0.97" stop-color="#10206a"/></linearGradient></defs><path d="M0.9 1.5 Q8 0.9 15.1 1.5 L15.1 2.9 L9.8 8.6 L9.8 15.3 L6.4 14.2 L6.4 8.6 L0.9 2.9 Z" fill="url(#g26)" stroke="#000" stroke-width="1.45" stroke-linejoin="round"/></svg>
<div class="tb" style="left:70.92px;top:407.99px;font-size:14.2px;letter-spacing:0.223px;-webkit-text-stroke:0.3px #000;">Meetings</div>
<div style="left:33.0px;top:434.6px;width:13.0px;height:0;border-top:1px dotted #b4b2b0;"></div>
<svg style="left:45.40px;top:424.66px" width="19.33" height="19.33" viewBox="0 0 16 16"><defs><linearGradient id="g27" x1="0" x2="1" y1="0" y2="0"><stop offset="0.45" stop-color="#fff"/><stop offset="0.72" stop-color="#c8d4f4"/><stop offset="0.86" stop-color="#4e7a9c"/><stop offset="1" stop-color="#10206a"/></linearGradient></defs><path d="M0.8 1.4 H15 L15 2.6 L10.2 7.8 L0.8 7.8 Z" fill="url(#g27)" stroke="#000" stroke-width="1.4" stroke-linejoin="round"/><path d="M2.3 9.6 V7.4 A2.8 2.8 0 0 1 7.9 7.4 V9.6" fill="none" stroke="#fff" stroke-width="3"/><path d="M2.3 9.6 V7.4 A2.8 2.8 0 0 1 7.9 7.4 V9.6" fill="none" stroke="#666" stroke-width="1.5"/><circle cx="5.1" cy="7.1" r="1.25" fill="#000"/><rect x="0.9" y="9.6" width="8.6" height="5.8" fill="#fff" stroke="#000" stroke-width="1.5"/><path d="M4.9 11.3 L4.1 13.3" stroke="#000" stroke-width="1.1"/></svg>
<div class="tb" style="left:70.92px;top:427.32px;font-size:14.2px;letter-spacing:0.020px;-webkit-text-stroke:0.3px #000;">Closing Account</div>
<div style="left:33.0px;top:453.9px;width:13.0px;height:0;border-top:1px dotted #b4b2b0;"></div>
<svg style="left:45.40px;top:443.99px" width="19.33" height="19.33" viewBox="0 0 16 16"><defs><linearGradient id="g28" x1="0" x2="1" y1="0" y2="0"><stop offset="0.45" stop-color="#fff"/><stop offset="0.72" stop-color="#c8d4f4"/><stop offset="0.86" stop-color="#4e7a9c"/><stop offset="1" stop-color="#10206a"/></linearGradient></defs><path d="M0.8 1.4 H15 L15 2.6 L10.2 7.8 L0.8 7.8 Z" fill="url(#g28)" stroke="#000" stroke-width="1.4" stroke-linejoin="round"/><path d="M2.3 9.6 V7.4 A2.8 2.8 0 0 1 7.9 7.4 V9.6" fill="none" stroke="#fff" stroke-width="3"/><path d="M2.3 9.6 V7.4 A2.8 2.8 0 0 1 7.9 7.4 V9.6" fill="none" stroke="#666" stroke-width="1.5"/><circle cx="5.1" cy="7.1" r="1.25" fill="#000"/><rect x="0.9" y="9.6" width="8.6" height="5.8" fill="#fff" stroke="#000" stroke-width="1.5"/><path d="M4.9 11.3 L4.1 13.3" stroke="#000" stroke-width="1.1"/></svg>
<div class="tb" style="left:70.92px;top:446.65px;font-size:14.2px;letter-spacing:-0.056px;-webkit-text-stroke:0.3px #000;">Equipment</div>
</div>
<div style="left:532.5px;top:258.7px;width:18.5px;height:458px;background:#eceae7;"></div>
<div class="sb" style="left:532.5px;top:258.7px;width:18.5px;height:19.3px;"></div>
<div class="sb" style="left:532.5px;top:278px;width:18.5px;height:321.5px;"></div>
<div class="sb" style="left:532.5px;top:697.7px;width:18.5px;height:19.3px;"></div>
<svg style="left:536.2px;top:264.7px" width="10" height="7" viewBox="0 0 10 7"><path d="M4.7 0.6 L9.4 6 H0 Z" fill="#000"/></svg>
<svg style="left:536.2px;top:704px" width="10" height="7" viewBox="0 0 10 7"><path d="M4.7 6.4 L9.4 1 H0 Z" fill="#000"/></svg>
<div style="left:133px;top:725px;width:420.5px;height:463.5px;background:#fff;border:1px solid;border-color:#5c5a5c #fff #fff #5c5a5c;box-shadow:inset 1px 1px 0 #48464a, inset -1px -1px 0 #d6d3ce;"></div>
<div class="hc" style="left:135px;top:727.3px;width:71.5px;height:19.6px;"></div>
<div class="t" style="left:140.48px;top:731.95px;font-size:13px;letter-spacing:-0.319px;">Name</div>
<div class="hc" style="left:206.5px;top:727.3px;width:60.80000000000001px;height:19.6px;"></div>
<div class="t" style="left:213.28px;top:731.95px;font-size:13px;letter-spacing:0.405px;">Active</div>
<div class="hc" style="left:267.3px;top:727.3px;width:60.69999999999999px;height:19.6px;"></div>
<div class="t" style="left:273.29px;top:731.95px;font-size:13px;letter-spacing:0.042px;">Locked</div>
<div class="hc" style="left:328px;top:727.3px;width:181.3px;height:19.6px;"></div>
<div class="t" style="left:333.69px;top:731.95px;font-size:13px;letter-spacing:0.281px;">Definition</div>
<div class="hc" style="left:509.3px;top:727.3px;width:41.69999999999999px;height:19.6px;"></div>
<div class="t" style="left:515.28px;top:731.95px;font-size:13px;letter-spacing:0.432px;">Share</div>
<div class="t" style="left:138.09px;top:752.15px;font-size:13px;letter-spacing:0.176px;">Delays</div>
<div class="t" style="left:213.98px;top:752.15px;font-size:13px;letter-spacing:0.360px;">True</div>
<div class="t" style="left:274.89px;top:752.15px;font-size:13px;letter-spacing:0.260px;">True</div>
<div class="t" style="left:333.99px;top:752.15px;font-size:13px;letter-spacing:0.160px;">Found topic "Dissatisfactio...</div>
<div class="t" style="left:516.28px;top:752.15px;font-size:13px;letter-spacing:-0.012px;">All</div>
<div class="t" style="left:138.09px;top:769.15px;font-size:13px;letter-spacing:0.245px;">Example...</div>
<div class="t" style="left:213.98px;top:769.15px;font-size:13px;letter-spacing:0.360px;">True</div>
<div class="t" style="left:274.89px;top:769.15px;font-size:13px;letter-spacing:0.260px;">True</div>
<div class="t" style="left:516.28px;top:769.15px;font-size:13px;letter-spacing:-0.012px;">All</div>
<div class="t" style="left:138.09px;top:786.15px;font-size:13px;letter-spacing:-0.257px;">High Bill</div>
<div class="t" style="left:213.98px;top:786.15px;font-size:13px;letter-spacing:0.360px;">True</div>
<div class="t" style="left:274.89px;top:786.15px;font-size:13px;letter-spacing:0.260px;">True</div>
<div class="t" style="left:333.99px;top:786.15px;font-size:13px;letter-spacing:-0.051px;">Found topic "High Bill Com...</div>
<div class="t" style="left:516.28px;top:786.15px;font-size:13px;letter-spacing:-0.012px;">All</div>
<div class="t" style="left:138.09px;top:803.15px;font-size:13px;letter-spacing:0.423px;">No Deliv...</div>
<div class="t" style="left:213.98px;top:803.15px;font-size:13px;letter-spacing:0.360px;">True</div>
<div class="t" style="left:274.89px;top:803.15px;font-size:13px;letter-spacing:0.260px;">True</div>
<div class="t" style="left:333.99px;top:803.15px;font-size:13px;letter-spacing:0.333px;">Found text "Delivery" at l...</div>
<div class="t" style="left:516.28px;top:803.15px;font-size:13px;letter-spacing:-0.012px;">All</div>
<div class="t" style="left:138.09px;top:820.15px;font-size:13px;letter-spacing:-0.039px;">No Service</div>
<div class="t" style="left:213.98px;top:820.15px;font-size:13px;letter-spacing:0.360px;">True</div>
<div class="t" style="left:274.89px;top:820.15px;font-size:13px;letter-spacing:0.260px;">True</div>
<div class="t" style="left:333.99px;top:820.15px;font-size:13px;letter-spacing:0.223px;">Found topic "Adjustments...</div>
<div class="t" style="left:516.28px;top:820.15px;font-size:13px;letter-spacing:-0.012px;">All</div>
<div style="left:135px;top:1168.3px;width:416px;height:17.7px;background:#eceae7;"></div>
<div class="sb" style="left:135px;top:1168.3px;width:18px;height:17.7px;"></div>
<div class="sb" style="left:153px;top:1168.3px;width:352px;height:17.7px;"></div>
<div class="sb" style="left:533px;top:1168.3px;width:18px;height:17.7px;"></div>
<svg style="left:140px;top:1172px" width="7" height="10" viewBox="0 0 7 10"><path d="M0.6 5 L6 0.4 V9.6 Z" fill="#000"/></svg>
<svg style="left:539px;top:1172px" width="7" height="10" viewBox="0 0 7 10"><path d="M6.4 5 L1 0.4 V9.6 Z" fill="#000"/></svg>
<div style="left:553.5px;top:150px;width:4.5px;height:1036px;background:linear-gradient(#f4f2f1,#d6d3ce 100px);"></div>
<div style="left:558px;top:150px;width:1143px;height:1036px;background:#d6d3ce;border-left:2px solid #9c9a96;border-top:1px solid #a8a6a2;"></div>
<div style="left:560px;top:151px;width:1141px;height:28px;background:#fff;"></div>
<div style="left:567px;top:155px;width:106px;height:24px;background:#dfdbd7;"></div>
<div style="left:673px;top:155px;width:1.8px;height:24px;background:#1a1a1a;"></div>
<svg style="left:567.00px;top:155.80px" width="19" height="19" viewBox="0 0 16 16"><defs><linearGradient id="g29" x1="0" x2="1" y1="0" y2="0"><stop offset="0.30" stop-color="#fff"/><stop offset="0.55" stop-color="#a4a2ee"/><stop offset="0.72" stop-color="#dfeaff"/><stop offset="0.86" stop-color="#4e7a9c"/><stop offset="0.97" stop-color="#10206a"/></linearGradient></defs><path d="M0.9 1.5 Q8 0.9 15.1 1.5 L15.1 2.9 L9.8 8.6 L9.8 15.3 L6.4 14.2 L6.4 8.6 L0.9 2.9 Z" fill="url(#g29)" stroke="#000" stroke-width="1.45" stroke-linejoin="round"/></svg>
<div class="tb" style="left:590.63px;top:159.76px;font-size:14px;letter-spacing:0.134px;">Complaints</div>
<svg style="left:676.5px;top:157px" width="19" height="18" viewBox="0 0 19 18"><path d="M1.4 5.6 L9 0.4 L18 9 L10.4 15 Z" fill="#0a0aff"/><path d="M0.6 6.6 L1.6 5.4 L10.6 14.8 L10.2 17.2 Z" fill="#00006a" stroke="#000" stroke-width="0.9" stroke-linejoin="round"/><path d="M10.6 14.8 L18 9 L18.6 11.4 L10.4 17.3 Z" fill="#fff" stroke="#222" stroke-width="0.9" stroke-linejoin="round"/><path d="M10.4 17.3 L18.6 11.6" stroke="#000" stroke-width="1.2"/></svg>
<div class="t g" style="left:699.28px;top:160.45px;font-size:13px;letter-spacing:0.813px;">\test</div>
<div style="left:732px;top:156px;width:1.4px;height:22px;background:#9a9896;"></div>
<svg style="left:735.00px;top:155.80px" width="19" height="19" viewBox="0 0 16 16"><defs><linearGradient id="g30" x1="0" x2="1" y1="0" y2="0"><stop offset="0.30" stop-color="#fff"/><stop offset="0.55" stop-color="#a4a2ee"/><stop offset="0.72" stop-color="#dfeaff"/><stop offset="0.86" stop-color="#4e7a9c"/><stop offset="0.97" stop-color="#10206a"/></linearGradient></defs><path d="M0.9 1.5 Q8 0.9 15.1 1.5 L15.1 2.9 L9.8 8.6 L9.8 15.3 L6.4 14.2 L6.4 8.6 L0.9 2.9 Z" fill="url(#g30)" stroke="#000" stroke-width="1.45" stroke-linejoin="round"/></svg>
<div class="t g" style="left:757.28px;top:160.45px;font-size:13px;letter-spacing:0.046px;">For Manager Review</div>
<div style="left:885.5px;top:156px;width:1.4px;height:22px;background:#9a9896;"></div>
<svg style="left:888.00px;top:155.80px" width="19" height="19" viewBox="0 0 16 16"><defs><linearGradient id="g31" x1="0" x2="1" y1="0" y2="0"><stop offset="0.30" stop-color="#fff"/><stop offset="0.55" stop-color="#a4a2ee"/><stop offset="0.72" stop-color="#dfeaff"/><stop offset="0.86" stop-color="#4e7a9c"/><stop offset="0.97" stop-color="#10206a"/></linearGradient></defs><path d="M0.9 1.5 Q8 0.9 15.1 1.5 L15.1 2.9 L9.8 8.6 L9.8 15.3 L6.4 14.2 L6.4 8.6 L0.9 2.9 Z" fill="url(#g31)" stroke="#000" stroke-width="1.45" stroke-linejoin="round"/></svg>
<div class="t g" style="left:911.58px;top:160.45px;font-size:13px;letter-spacing:-0.057px;">Closing Account</div>
<div style="left:1009px;top:156px;width:1.4px;height:22px;background:#9a9896;"></div>
<svg style="left:1013px;top:157px" width="19" height="18" viewBox="0 0 19 18"><path d="M1.4 5.6 L9 0.4 L18 9 L10.4 15 Z" fill="#0a0aff"/><path d="M0.6 6.6 L1.6 5.4 L10.6 14.8 L10.2 17.2 Z" fill="#00006a" stroke="#000" stroke-width="0.9" stroke-linejoin="round"/><path d="M10.6 14.8 L18 9 L18.6 11.4 L10.4 17.3 Z" fill="#fff" stroke="#222" stroke-width="0.9" stroke-linejoin="round"/><path d="M10.4 17.3 L18.6 11.6" stroke="#000" stroke-width="1.2"/></svg>
<div class="t g" style="left:1038.88px;top:160.45px;font-size:13px;letter-spacing:-0.223px;">\Sales Campaign - Family Package</div>
<div style="left:1242px;top:156px;width:1.4px;height:22px;background:#9a9896;"></div>
<svg style="left:1245.00px;top:155.80px" width="19" height="19" viewBox="0 0 16 16"><defs><linearGradient id="g32" x1="0" x2="1" y1="0" y2="0"><stop offset="0.30" stop-color="#fff"/><stop offset="0.55" stop-color="#a4a2ee"/><stop offset="0.72" stop-color="#dfeaff"/><stop offset="0.86" stop-color="#4e7a9c"/><stop offset="0.97" stop-color="#10206a"/></linearGradient></defs><path d="M0.9 1.5 Q8 0.9 15.1 1.5 L15.1 2.9 L9.8 8.6 L9.8 15.3 L6.4 14.2 L6.4 8.6 L0.9 2.9 Z" fill="url(#g32)" stroke="#000" stroke-width="1.45" stroke-linejoin="round"/></svg>
<div class="t g" style="left:1269.59px;top:160.45px;font-size:13px;letter-spacing:-0.040px;">New Customer</div>
<div style="left:1361px;top:156px;width:1.4px;height:22px;background:#9a9896;"></div>
<svg style="left:1645px;top:158px" width="52" height="16" viewBox="0 0 52 16"><path d="M8.5 2.5 V12.5 L4 7.5 Z M20.5 2.5 V12.5 L25 7.5 Z" fill="none" stroke="#8a8a8a" stroke-width="1"/><path d="M39 3 L48 12 M48 3 L39 12" stroke="#9a9a9a" stroke-width="1.2"/></svg>
<div style="left:560px;top:179px;width:1141px;height:30px;background:linear-gradient(#fdfcfc,#f1eeee 50%,#d6d3ce);"></div>
<div style="left:563px;top:184px;width:2px;height:2px;background:#9a9896;"></div>
<div style="left:563px;top:189px;width:2px;height:2px;background:#9a9896;"></div>
<div style="left:563px;top:194px;width:2px;height:2px;background:#9a9896;"></div>
<div style="left:563px;top:199px;width:2px;height:2px;background:#9a9896;"></div>
<svg style="left:571px;top:183.7px" width="19.5" height="19.5" viewBox="0 0 16 16"><defs><linearGradient id="g33" x1="0" x2="1" y1="0" y2="1"><stop offset="0" stop-color="#9a9af0"/><stop offset="1" stop-color="#2424a4"/></linearGradient></defs><rect x="0.3" y="0.3" width="15.4" height="15.4" fill="url(#g33)"/><rect x="3" y="0.3" width="10" height="7" fill="#f4f4ff"/><rect x="4" y="10.5" width="8" height="5.2" fill="#1c1c70"/><rect x="6.4" y="11.6" width="2.8" height="2.6" fill="#e0e0f0"/></svg>
<div class="t" style="left:574.78px;top:263.25px;font-size:13px;letter-spacing:-0.319px;">Name</div>
<div class="sunk" style="left:659px;top:257.5px;width:243px;height:25px;background:#fff;"></div>
<div class="t" style="left:661.08px;top:263.25px;font-size:13px;letter-spacing:-0.089px;">Complaints</div>
<div class="t" style="left:911.58px;top:263.25px;font-size:13px;letter-spacing:0.147px;">Shared with</div>
<div class="sunk" style="left:995px;top:257.5px;width:501px;height:25px;background:#d6d3ce;"></div>
<div class="t" style="left:997.28px;top:263.25px;font-size:13px;letter-spacing:-0.262px;">All</div>
<div class="btn" style="left:1504px;top:253px;width:91px;height:28.4px;"></div>
<div class="t" style="left:1530.29px;top:260.65px;font-size:13px;letter-spacing:0.697px;">Edit...</div>
<div class="t" style="left:574.68px;top:299.65px;font-size:13px;letter-spacing:0.100px;">Description</div>
<div class="sunk" style="left:659px;top:293.5px;width:936px;height:58px;background:#fff;"></div>
<div class="t" style="left:664.99px;top:299.65px;font-size:13px;letter-spacing:0.185px;">Auto-generated default Category for topic: Complaints</div>
<div class="btn" style="left:569.4px;top:364px;width:29px;height:26px;"></div>
<svg style="left:574px;top:368px" width="20" height="18" viewBox="0 0 20 18"><path d="M2 2 L17 16 M17 2 L2 16" stroke="#222" stroke-width="1.6"/></svg>
<div class="btn" style="left:617px;top:364px;width:46.60000000000002px;height:26px;"></div>
<div class="t dis" style="left:617px;top:370.45px;width:46.60000000000002px;text-align:center;font-size:13px;">And</div>
<div class="btn" style="left:663.6px;top:364px;width:38.10000000000002px;height:26px;"></div>
<div class="t dis" style="left:663.6px;top:370.45px;width:38.10000000000002px;text-align:center;font-size:13px;">Or</div>
<div class="btn" style="left:701.7px;top:364px;width:41.59999999999991px;height:26px;"></div>
<div class="t dis" style="left:701.7px;top:370.45px;width:41.59999999999991px;text-align:center;font-size:13px;">Not</div>
<div class="btn" style="left:743.3px;top:364px;width:38.700000000000045px;height:26px;"></div>
<div class="t dis" style="left:743.3px;top:370.45px;width:38.700000000000045px;text-align:center;font-size:13px;">(</div>
<div class="btn" style="left:782px;top:364px;width:38px;height:26px;"></div>
<div class="t dis" style="left:782px;top:370.45px;width:38px;text-align:center;font-size:13px;">)</div>
<div class="btn" style="left:820px;top:364px;width:33.39999999999998px;height:26px;"></div>
<div class="t dis" style="left:820px;top:370.45px;width:33.39999999999998px;text-align:center;font-size:13px;">-&gt;</div>
<div class="btn" style="left:1452px;top:364px;width:63px;height:26px;"></div>
<div class="t dis" style="left:1452px;top:370.45px;width:63px;text-align:center;font-size:13px;">Copy</div>
<div class="btn" style="left:1519px;top:364px;width:63px;height:26px;"></div>
<div class="t dis" style="left:1519px;top:370.45px;width:63px;text-align:center;font-size:13px;">Paste</div>
<div style="left:569px;top:397px;width:1082px;height:434px;background:#fff;"></div>
<div style="left:1631.5px;top:397px;width:19.5px;height:415px;background:#eceae7;"></div>
<div class="sb" style="left:1631.5px;top:397px;width:19.5px;height:19.5px;"></div>
<div class="sb" style="left:1631.5px;top:792.5px;width:19.5px;height:19.5px;"></div>
<svg style="left:1636.5px;top:403px" width="10" height="7" viewBox="0 0 10 7"><path d="M5 1 L9 5.5 H1 Z" fill="#848284"/></svg>
<svg style="left:1636.5px;top:799px" width="10" height="7" viewBox="0 0 10 7"><path d="M5 6 L9 1.5 H1 Z" fill="#848284"/></svg>
<div style="left:569px;top:812px;width:1062.5px;height:19px;background:#eceae7;"></div>
<div class="sb" style="left:569px;top:812px;width:19.5px;height:19px;"></div>
<div class="sb" style="left:1612px;top:812px;width:19.5px;height:19px;"></div>
<svg style="left:574.5px;top:816.5px" width="7" height="10" viewBox="0 0 7 10"><path d="M1 5 L5.5 1 V9 Z" fill="#848284"/></svg>
<svg style="left:1618.5px;top:816.5px" width="7" height="10" viewBox="0 0 7 10"><path d="M6 5 L1.5 1 V9 Z" fill="#848284"/></svg>
<div class="btn" style="left:569px;top:839px;width:25.5px;height:24.5px;"></div>
<svg style="left:573px;top:842px" width="18" height="19" viewBox="0 0 18 19"><path d="M2.5 1.5 H10.5 L15 6 V17 H2.5 Z" fill="#f6f6f6" stroke="#555" stroke-width="1"/><path d="M10.5 1.5 V6 H15" fill="#fff" stroke="#555" stroke-width="1"/></svg>
<div style="left:570px;top:878.5px;width:1080px;height:299px;border:1px solid #848284;box-shadow:1px 1px 0 #fff, inset 1px 1px 0 #fff;"></div>
<div style="left:578px;top:872px;width:119px;height:14px;background:#d6d3ce;"></div>
<div class="t" style="left:579.88px;top:872.85px;font-size:13px;letter-spacing:-0.014px;color:#848284;">Element Properties</div>
<div class="t" style="left:580.28px;top:897.65px;font-size:13px;letter-spacing:0.514px;color:#5a5a5a;">Type</div>
<div class="sunk" style="left:625px;top:892px;width:134px;height:23.5px;background:#d6d3ce;"></div>
<div class="sb" style="left:739px;top:894px;width:18.5px;height:19.5px;"></div>
<svg style="left:743.5px;top:900.5px" width="10" height="7" viewBox="0 0 10 7"><path d="M5 6 L9 1.5 H1 Z" fill="#848284"/></svg>
<div class="btn" style="left:1490.5px;top:1143.5px;width:91px;height:28px;"></div>
<div class="t dis" style="left:1490.5px;top:1150.95px;width:91.0px;text-align:center;font-size:13px;">Add</div>
<div style="left:130px;top:1184.6px;width:1571px;height:1.2px;background:#f0eeec;"></div>
<div style="left:130px;top:1185.8px;width:1571px;height:2.2px;background:#d6d3ce;"></div>
<div style="left:130px;top:1187.8px;width:1571px;height:0.8px;background:#848284;"></div>
<div style="left:130px;top:1188.5px;width:1571px;height:2.4px;background:#424142;"></div>
<div style="left:130px;top:1190.9px;width:1571px;height:2px;background:#fff;"></div>
<div class="ln" style="left:79.2px;top:131.0px;width:62.4px;height:3px;"></div>
<div class="co" style="left:47.2px;top:117.3px;width:26.8px;height:26.8px;line-height:27.4px;font-size:20px;">1</div>
<div class="ln" style="left:79.2px;top:163.0px;width:62.4px;height:3px;"></div>
<div class="co" style="left:47.2px;top:150.1px;width:26.8px;height:26.8px;line-height:27.4px;font-size:20px;">2</div>
<div class="ln" style="left:79.2px;top:212.2px;width:62.4px;height:3px;"></div>
<div class="co" style="left:47.2px;top:201.1px;width:26.8px;height:26.8px;line-height:27.4px;font-size:20px;">3</div>
<div class="ln" style="left:79.2px;top:244.0px;width:62.4px;height:3px;"></div>
<div class="co" style="left:47.2px;top:231.4px;width:26.8px;height:26.8px;line-height:27.4px;font-size:20px;">4</div>
<div class="ln" style="left:79.2px;top:366.0px;width:62.4px;height:3px;"></div>
<div class="co" style="left:47.2px;top:355.2px;width:26.8px;height:26.8px;line-height:27.4px;font-size:20px;">7</div>
<div class="ln" style="left:79.2px;top:855.9px;width:62.4px;height:3px;"></div>
<div class="co" style="left:47.2px;top:842.2px;width:26.8px;height:26.8px;line-height:27.4px;font-size:20px;">8</div>
<div class="ln" style="left:341.15000000000003px;top:50.6px;width:2.9px;height:181.4px;"></div>
<div class="co" style="left:329.2px;top:19.4px;width:26.8px;height:26.8px;line-height:27.4px;font-size:20px;">5</div>
<div class="ln" style="left:450.95px;top:50.6px;width:2.9px;height:181.9px;"></div>
<div class="co" style="left:440.2px;top:19.4px;width:26.8px;height:26.8px;line-height:27.4px;font-size:20px;">6</div>
<div class="ln" style="left:519.9499999999999px;top:50.6px;width:2.9px;height:127.4px;"></div>
<div class="co" style="left:508.1px;top:19.4px;width:26.8px;height:26.8px;line-height:27.4px;font-size:20px;">9</div>
<div class="ln" style="left:704.15px;top:50.6px;width:2.9px;height:102.80000000000001px;"></div>
<div class="co" style="left:691.9px;top:19.4px;width:26.8px;height:26.8px;line-height:27.4px;font-size:16px;">10</div>
</body></html>
